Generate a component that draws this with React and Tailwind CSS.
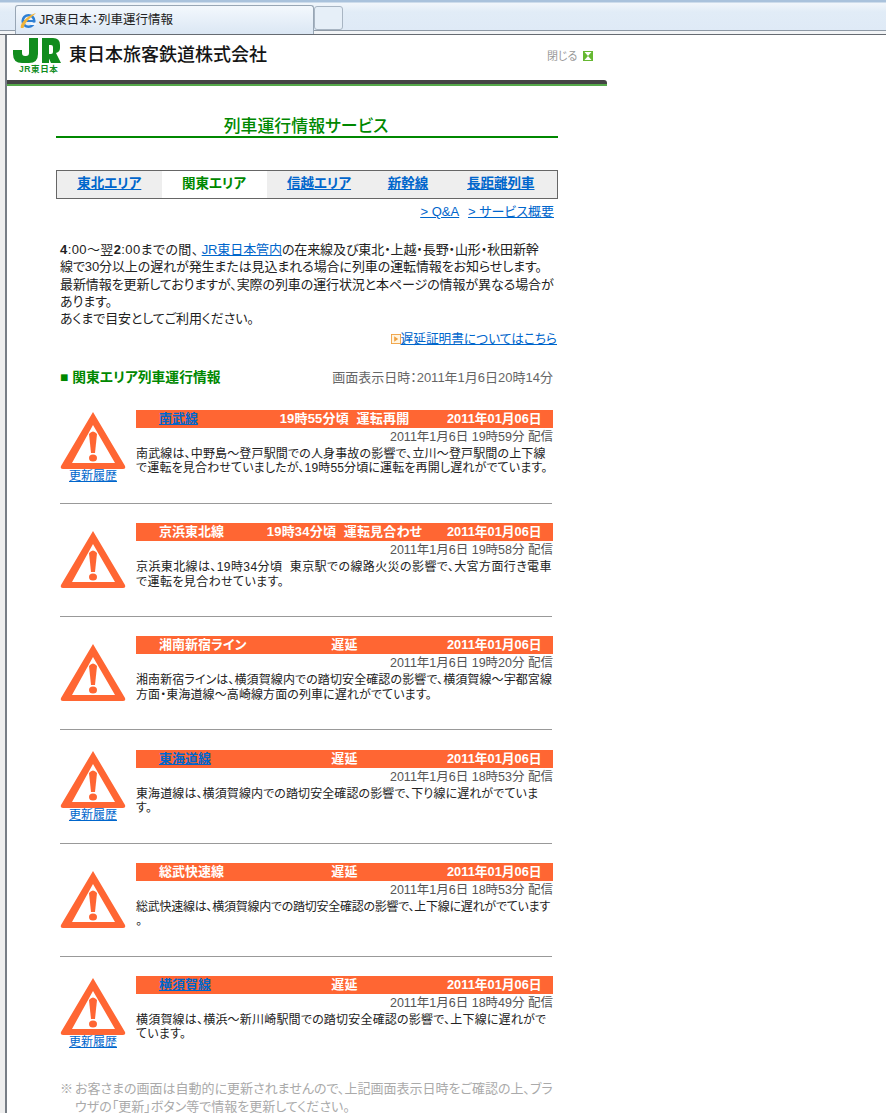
const jp = "font-['Liberation_Sans','Noto_Sans_CJK_JP',sans-serif] [font-feature-settings:'palt']";

function Warn() {
  return (
    <svg width="66" height="58" viewBox="0 0 66 58" className="block">
      <path fillRule="evenodd" d="M33 0 L65 54 Q66 57 63 57 H3 Q0 57 1 54 Z M33 13 L12 51 H55 Z" fill="#ff6633" />
      <path d="M29 22 Q33 17 37 22 L35 41 H31 Z" fill="#ff6633" />
      <ellipse cx="33" cy="46" rx="4" ry="3.5" fill="#ff6633" />
    </svg>
  );
}

function JRLogo() {
  return (
    <svg width="48" height="26" viewBox="0 0 48 26" className="block">
      <path d="M16 0 H25 V16 Q25 25 16 25 H9 Q0 25 0 16 V12 H9 V15 Q9 18 12 18 H13 Q16 18 16 15 Z" fill="#118c1e" />
      <path d="M29 0 H40 Q47 0 47 7 V10 Q47 14 43 15 L48 25 H38 L34 16 H38 Q40 16 40 14 V9 Q40 7 38 7 H36 V25 H29 Z" fill="#118c1e" />
    </svg>
  );
}

const rows = [
  { name: "南武線", link: true, status: "19時55分頃  運転再開", at: "2011年1月6日 19時59分 配信", tr: "tracking-[0.15px]", text: "南武線は、中野島～登戸駅間での人身事故の影響で、立川～登戸駅間の上下線\nで運転を見合わせていましたが、19時55分頃に運転を再開し遅れがでています。", hist: true },
  { name: "京浜東北線", status: "19時34分頃  運転見合わせ", at: "2011年1月6日 19時58分 配信", tr: "tracking-[0.4px]", text: "京浜東北線は、19時34分頃  東京駅での線路火災の影響で、大宮方面行き電車\nで運転を見合わせています。" },
  { name: "湘南新宿ライン", status: "遅延", at: "2011年1月6日 19時20分 配信", tr: "tracking-[0.1px]", text: "湘南新宿ラインは、横須賀線内での踏切安全確認の影響で、横須賀線～宇都宮線\n方面・東海道線～高崎線方面の列車に遅れがでています。" },
  { name: "東海道線", link: true, status: "遅延", at: "2011年1月6日 18時53分 配信", tr: "tracking-[0.1px]", text: "東海道線は、横須賀線内での踏切安全確認の影響で、下り線に遅れがでていま\nす。", hist: true },
  { name: "総武快速線", status: "遅延", at: "2011年1月6日 18時53分 配信", tr: "tracking-[-0.26px]", text: "総武快速線は、横須賀線内での踏切安全確認の影響で、上下線に遅れがでています\n。" },
  { name: "横須賀線", link: true, status: "遅延", at: "2011年1月6日 18時49分 配信", tr: "tracking-[0.2px]", text: "横須賀線は、横浜～新川崎駅間での踏切安全確認の影響で、上下線に遅れがで\nています。", hist: true },
];

const tabs = ["東北エリア", "関東エリア", "信越エリア", "新幹線", "長距離列車"];

function Row({ r, last }) {
  return (
    <div className={last ? "h-[100px] ml-[4px]" : "h-[113.2px] ml-[4px]"}>
      <div className="flex h-[93px] w-full pr-[5px]">
        <div className="w-[76px] shrink-0 h-[74px] flex flex-col justify-center">
          <div className="w-[66px] flex flex-col items-center">
            <Warn />
            {r.hist && <a className="text-[12px] leading-[14px] text-[#0066cc] underline -mt-[1px]">更新履歴</a>}
          </div>
        </div>
        <div className="w-[417px] min-w-0">
          <div className="h-[18px] bg-[#ff6633] grid grid-cols-[119px_179px_119px] items-center font-bold text-white text-[13px] leading-[18px]">
            <div className="pl-[23px]">{r.link ? <a className="text-[#0066cc] underline">{r.name}</a> : r.name}</div>
            <div className="text-center whitespace-pre tracking-[0.2px]">{r.status}</div>
            <div className="pl-[13px] whitespace-nowrap text-[12.8px]">2011年01月06日</div>
          </div>
          <div className="text-right text-[#555555] text-[12.5px] leading-[19px] whitespace-nowrap">{r.at}</div>
          <div className={"text-[#222222] text-[12px] leading-[14.4px] whitespace-pre " + r.tr}>{r.text}</div>
        </div>
      </div>
      {!last && <div className="h-px bg-[#999999] w-[492px]" />}
    </div>
  );
}

export default function App() {
  return (
    <div className={"h-[1113px] w-[886px] overflow-hidden bg-white flex flex-col " + jp}>
      <div className="h-[35px] shrink-0 relative bg-[linear-gradient(#a9c2dc_0,#a9c2dc_2px,#f1f6fb_3px,#e1ecf7_12px,#dfeaf6_30px,#8f9aa6_30px,#8f9aa6_31px,#f2f4f6_31px)] border-b border-[#666b72]">
        <div className="absolute left-[15px] top-[5px] w-[299px] h-[29px] rounded-t-[3px] border border-b-0 border-[#98a6b5] bg-[linear-gradient(#f3f8fd,#dbe7f4)] flex items-center pl-[4px] gap-[2px]">
          <svg width="17" height="17" viewBox="0 0 17 17">
            <circle cx="8.5" cy="9" r="5.8" fill="none" stroke="#2d7fd3" strokeWidth="2.6" />
            <rect x="3" y="8" width="11" height="2" fill="#2d7fd3" />
            <path d="M10.5 10.6 H16 V13 H10.5 Z" fill="#f3f8fd" />
            <path d="M1 16 C-1 12 8 3 16 1 C13 4 5 9 3.5 16 Z" fill="#f0b43a" />
          </svg>
          <span className="text-[12.5px] text-[#222222] whitespace-nowrap">JR東日本：列車運行情報</span>
        </div>
        <div className="absolute left-[314px] top-[6px] w-[29px] h-[24px] rounded-[3px] border border-[#a8b5c3] bg-[#e6eff8]" />
      </div>
      <div className="flex flex-1 min-h-0">
        <div className="w-[5px] shrink-0 bg-[#eeeeee]" />
        <div className="w-[2px] shrink-0 bg-[#777d85]" />
        <div className="flex-1 min-w-0">
          <div className="w-[600px]">
            <div className="h-[45px] flex items-start relative">
              <div className="ml-[6px] mt-[3px]"><JRLogo /></div>
              <span className="absolute left-[12px] top-[30px] text-[8.5px] tracking-[0.6px] leading-[9px] font-bold text-[#118c1e] whitespace-nowrap">JR東日本</span>
              <span className="ml-[8px] mt-[6px] text-[18px] leading-[28px] font-medium text-[#151515] whitespace-nowrap [font-feature-settings:normal]">東日本旅客鉄道株式会社</span>
              <span className="absolute left-[540px] top-[14px] text-[11px] leading-[14px] text-[#999999] whitespace-nowrap">閉じる</span>
              <svg className="absolute left-[576px] top-[16px]" width="10" height="10" viewBox="0 0 10 10">
                <rect width="10" height="10" fill="#66b832" />
                <path d="M1.5 1 H8.5 L5 5 L8.5 9 H1.5 L5 5 Z" fill="#ffffff" />
              </svg>
            </div>
            <div className="h-[6px] rounded-tr-[3px] bg-[linear-gradient(#444444_0,#444444_4px,#55a84a_4px,#55a84a_6px)]" />
          </div>
          <div className="w-[502px] ml-[49px]">
            <div className="mt-[29px] pt-[3px] pr-[2px] text-center text-[16.9px] leading-[18px] text-[#008800] font-medium">列車運行情報サービス</div>
            <div className="h-[2px] bg-[#008800]" />
            <div className="mt-[32px] h-[29px] border border-[#666666] bg-[#eeeeee] grid grid-cols-[104.5px_105px_105px_73px_1fr] text-[13.5px] font-bold leading-[25px] text-center">
              {tabs.map((t, i) =>
                i === 1 ? (
                  <div key={t} className="bg-white text-[#008800]">{t}</div>
                ) : (
                  <a key={t} className="text-[#0066cc] underline">{t}</a>
                )
              )}
            </div>
            <div className="mt-[4px] pr-[4px] flex justify-end gap-[9px] text-[13px] leading-[18px] text-[#0066cc] underline">
              <a>&gt; Q&amp;A</a>
              <a>&gt; サービス概要</a>
            </div>
            <div className="mt-[20px] px-[4px] text-[13px] leading-[17.3px] tracking-[-0.1px] text-[#222222] whitespace-nowrap">
              <div><span className="tracking-[0.4px]"><b>4</b>:00～翌<b>2</b>:00までの間、</span><a className="text-[#0066cc] underline ml-[3px]">JR東日本管内</a>の在来線及び東北・上越・長野・山形・秋田新幹</div>
              <div>線で30分以上の遅れが発生または見込まれる場合に列車の運転情報をお知らせします。</div>
              <div>最新情報を更新しておりますが、実際の列車の運行状況と本ページの情報が異なる場合が</div>
              <div>あります。</div>
              <div>あくまで目安としてご利用ください。</div>
            </div>
            <div className="mt-[3px] pr-[1px] flex justify-end items-center text-[12.7px] leading-[18px]">
              <svg width="10" height="10" viewBox="0 0 11 11">
                <rect x="0.5" y="0.5" width="10" height="10" fill="#fff4e0" stroke="#f0a040" />
                <path d="M3.5 2.5 L8 5.5 L3.5 8.5 Z" fill="#f0a040" />
              </svg>
              <a className="text-[#0066cc] underline">遅延証明書についてはこちら</a>
            </div>
            <div className="mt-[21px] pl-[4px] pr-[5px] flex justify-between items-center leading-[18px]">
              <span className="text-[13.8px] font-bold text-[#008800]">■ 関東エリア列車運行情報</span>
              <span className="text-[13px] text-[#666666]">画面表示日時：2011年1月6日20時14分</span>
            </div>
            <div className="mt-[22.6px]">
              {rows.map((r, i) => (
                <Row key={r.name} r={r} last={i === rows.length - 1} />
              ))}
            </div>
            <div className="mt-[4px] ml-[4px] flex text-[13px] leading-[18px] text-[#aaaaaa] whitespace-nowrap">
              <span className="w-[15px] shrink-0">※</span>
              <span>お客さまの画面は自動的に更新されませんので、上記画面表示日時をご確認の上、ブラ<br />ウザの「更新」ボタン等で情報を更新してください。</span>
            </div>
          </div>
        </div>
      </div>
    </div>
  );
}
